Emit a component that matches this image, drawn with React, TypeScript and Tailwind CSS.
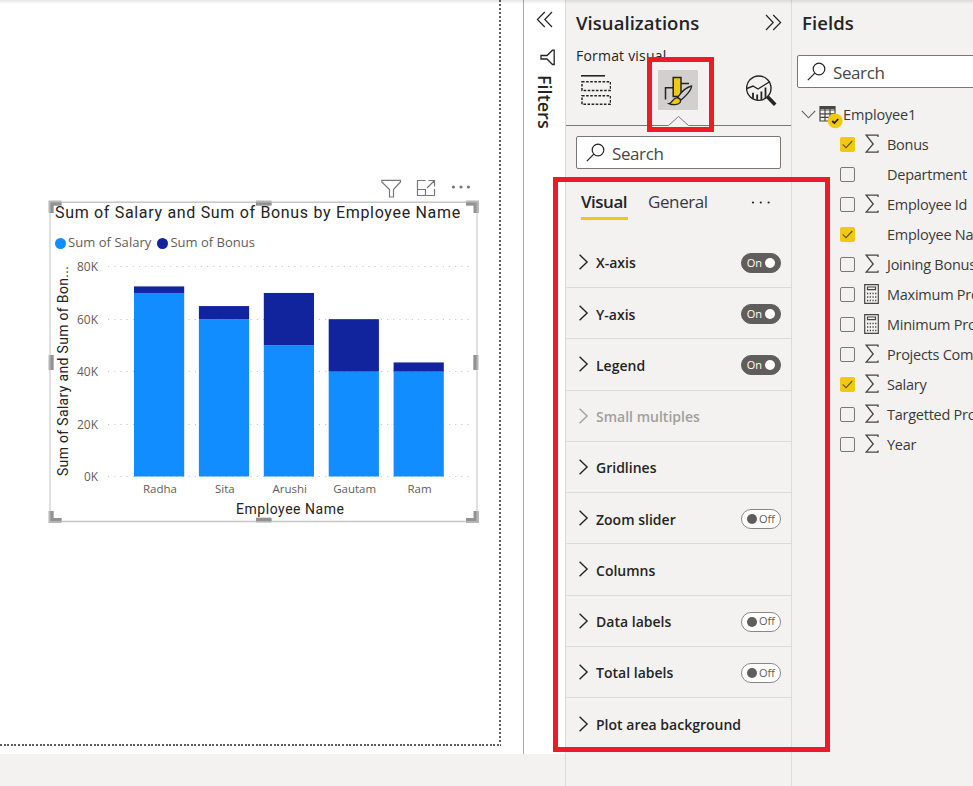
import clsx from "clsx";

type FieldIcon = "sigma" | "calc" | null;

interface Field {
  name: string;
  icon: FieldIcon;
  checked?: boolean;
}

interface FormatCard {
  label: string;
  toggle?: "on" | "off";
  disabled?: boolean;
}

const FIELDS: Field[] = [
  { name: "Bonus", icon: "sigma", checked: true },
  { name: "Department", icon: null },
  { name: "Employee Id", icon: "sigma" },
  { name: "Employee Name", icon: null, checked: true },
  { name: "Joining Bonus", icon: "sigma" },
  { name: "Maximum Projects", icon: "calc" },
  { name: "Minimum Projects", icon: "calc" },
  { name: "Projects Completed", icon: "sigma" },
  { name: "Salary", icon: "sigma", checked: true },
  { name: "Targetted Projects", icon: "sigma" },
  { name: "Year", icon: "sigma" },
];

const CARDS: FormatCard[] = [
  { label: "X-axis", toggle: "on" },
  { label: "Y-axis", toggle: "on" },
  { label: "Legend", toggle: "on" },
  { label: "Small multiples", disabled: true },
  { label: "Gridlines" },
  { label: "Zoom slider", toggle: "off" },
  { label: "Columns" },
  { label: "Data labels", toggle: "off" },
  { label: "Total labels", toggle: "off" },
  { label: "Plot area background" },
];

const BARS = [
  { name: "Radha", salary: 70, bonus: 2.5 },
  { name: "Sita", salary: 60, bonus: 5 },
  { name: "Arushi", salary: 50, bonus: 20 },
  { name: "Gautam", salary: 40, bonus: 20 },
  { name: "Ram", salary: 40, bonus: 3.5 },
];

const TICKS = [80, 60, 40, 20, 0];

// plot coordinates, relative to the chart svg
const BASE = 222.5;
const UNIT = 2.622;

function Plot() {
  return (
    <svg width="431" height="269" className="block font-['Open_Sans',sans-serif]">
      {TICKS.map((tick) => {
        const y = Math.floor(BASE - tick * UNIT) + 0.5;
        return (
          <g key={tick}>
            <line x1="60" x2="423" y1={y} y2={y} stroke="#c8c8c8" strokeWidth="1" strokeDasharray="1.2 5" />
            <text x="50" y={y + 4} textAnchor="end" fontSize="12" fill="#605e5c" textLength={tick ? 21 : 14} lengthAdjust="spacingAndGlyphs">
              {tick}K
            </text>
          </g>
        );
      })}
      {BARS.map((bar, i) => {
        const x = 86 + i * 64.9;
        const salary = bar.salary * UNIT;
        const bonus = bar.bonus * UNIT;
        return (
          <g key={bar.name}>
            <rect x={x} y={BASE - salary} width="50.2" height={salary} fill="#118dff" />
            <rect x={x} y={BASE - salary - bonus} width="50.2" height={bonus} fill="#12239e" />
            <text x={x + 26} y="239" textAnchor="middle" fontSize="11.5" fill="#605e5c">
              {bar.name}
            </text>
          </g>
        );
      })}
      <text x="188" y="260" fontSize="14" fill="#252423" textLength="108" className="font-[Roboto,sans-serif]">
        Employee Name
      </text>
      <text transform="translate(19.5 222) rotate(-90)" fontSize="14" fill="#252423" textLength="210" className="font-[Roboto,sans-serif]">
        Sum of Salary and Sum of Bon...
      </text>
    </svg>
  );
}

function SelectionFrame() {
  return (
    <svg width="431" height="323" className="absolute inset-0" fill="none">
      <rect x="2" y="2" width="427" height="319.5" stroke="#e0e0e0" strokeWidth="2" />
      <path d="M1 2.5H430M1 321.5H430" stroke="#c8c8c8" />
      <g stroke="#b6b6b6" strokeWidth="5">
        <path d="M13.5 3H3V13M208 3H223.5M418 3H428.5V13M3 155V170M428 155V170M13.5 320.5H3V311M208 320H223.5M418 320.5H428.5V311" />
      </g>
      <g stroke="#929292" strokeWidth="3">
        <path d="M13.5 4H4V13M208 4H223.5M418 4H427V13M4 155V170M427 155V170M13.5 319.5H4V311M208 319.5H223.5M418 319.5H427V311" />
      </g>
    </svg>
  );
}

function ChartVisual() {
  return (
    <div>
      <div className="flex h-[22px] w-[431px] items-center justify-end gap-[14px] pr-[9px] text-[#7a7876]">
        <svg width="22" height="20" fill="none" stroke="currentColor" strokeWidth="1.2">
          <path d="M1.8 1.3H20.5V3L13.5 10.5V18H9.5V10.5L1.8 3Z" />
        </svg>
        <svg width="20" height="18" fill="none" stroke="currentColor" strokeWidth="1.2" className="-mt-[2px]">
          <path d="M9.5 1.5H1.5V16.5H18.5V10M1.5 10.5H9.5V16.5M11 9L18 2M12.5 1.5H18.5V7.5" />
        </svg>
        <svg width="20" height="6" fill="currentColor" className="-mt-[2px]">
          <circle cx="3.4" cy="2" r="1.6" />
          <circle cx="11" cy="2" r="1.6" />
          <circle cx="18.4" cy="2" r="1.6" />
        </svg>
      </div>
      <div className="relative h-[323px] w-[431px]">
        <SelectionFrame />
        <div className="relative pt-[3px] pl-[7px] font-[Roboto,sans-serif] text-[16px] leading-[19px] tracking-[0.68px] whitespace-nowrap text-[#252423]">
          Sum of Salary and Sum of Bonus by Employee Name
        </div>
        <div className="mt-[12px] flex h-[18px] items-center gap-[6px] pl-[7px] text-[13px] text-[#605e5c]">
          <div className="flex items-center gap-[2px]">
            <span className="size-[11px] rounded-full bg-[#118dff]" />
            <span className="tracking-[0.05px]">Sum of Salary</span>
          </div>
          <div className="flex items-center gap-[2px]">
            <span className="size-[11px] rounded-full bg-[#12239e]" />
            <span>Sum of Bonus</span>
          </div>
        </div>
        <div className="mt-[2px]">
          <Plot />
        </div>
      </div>
    </div>
  );
}

function DoubleChevron({ left }: { left?: boolean }) {
  return (
    <svg width="17" height="17" fill="none" stroke="#252423" strokeWidth="1.2" className={clsx(left && "rotate-180")}>
      <path d="M1 1L8.2 8.5L1 16M8.2 1L15.6 8.5L8.2 16" />
    </svg>
  );
}

function SearchBox({ className }: { className?: string }) {
  return (
    <div className={clsx("flex h-[33px] items-center rounded-[2px] border border-[#7a7876] bg-white pl-[9px]", className)}>
      <svg width="19" height="19" fill="none" stroke="#252423" strokeWidth="1.2">
        <circle cx="12" cy="7" r="5.8" />
        <path d="M7.8 11.2L0.8 18.2" />
      </svg>
      <span className="mt-[2px] ml-[7px] text-[17px] tracking-[-0.4px] text-[#484644]">Search</span>
    </div>
  );
}

function FiltersPane() {
  return (
    <div className="flex w-[42px] flex-col items-center border-l border-[#ababab] bg-white pt-[11px]">
      <DoubleChevron left />
      <svg width="16" height="17" fill="none" stroke="#252423" strokeWidth="1.3" className="mt-[21px] ml-[6px]">
        <path d="M14.2 1.2V15.5H12.5L7 10H1V6.5H7L12.5 1.2Z" />
      </svg>
      <div className="mt-[9px] ml-px text-[18px] leading-[20px] font-semibold text-[#252423] [writing-mode:vertical-rl]">
        Filters
      </div>
    </div>
  );
}

function FieldWellsIcon() {
  return (
    <svg width="30" height="30" fill="none" stroke="#252423">
      <path d="M0 0.8H24" strokeWidth="1.6" />
      <path d="M1 6.8H29.5V15.5H1Z M1 20.8H29.5V29.3H1Z" strokeWidth="1.5" strokeDasharray="2.6 1.5" />
    </svg>
  );
}

function FormatIcon() {
  return (
    <svg width="29" height="31" fill="none" stroke="#252423" strokeWidth="1.5">
      <path d="M1.5 24.5V12.8H9M17 8.5H25" />
      <path d="M9.2 2.5H17V21.5H9.2Z" fill="#f2c811" />
      <path d="M13.6 22.3C17 17.5 22 12 27.6 11C27.5 15 21.5 21.5 17 25Z" fill="#d2d0ce" strokeWidth="1.3" />
      <path d="M5 28.6C8.3 28.2 8.6 23.4 12.4 22.9C15.6 22.8 17.5 25.2 16.2 27.4C14 30.3 8.5 30.2 5 28.6Z" fill="#f2c811" strokeWidth="1.3" />
    </svg>
  );
}

function AnalyticsIcon() {
  return (
    <svg width="32" height="32" fill="none" stroke="#252423" strokeWidth="1.4">
      <circle cx="12.8" cy="13.2" r="12.2" />
      <path d="M1 13.5L7 11L12 14L24 6.5" />
      <path d="M7 23.5V17.8M11.2 25V19.5M15.4 25V16.5M19.5 23V12.5" strokeWidth="1.8" />
      <path d="M21.5 21.8L29.2 29.8" strokeWidth="3.6" />
    </svg>
  );
}

function Toggle({ on }: { on: boolean }) {
  return (
    <div
      className={clsx(
        "mt-[2px] flex h-5 w-10 items-center rounded-full border text-[11px]",
        on ? "justify-end gap-[3px] border-[#605e5c] bg-[#605e5c] pr-[5px] text-white" : "gap-[2px] border-[#8a8886] bg-white pl-[5px] text-[#605e5c]"
      )}
    >
      {on && <span>On</span>}
      <span className={clsx("size-[10px] shrink-0 rounded-full", on ? "bg-white" : "bg-[#605e5c]")} />
      {!on && <span>Off</span>}
    </div>
  );
}

function VisualizationsPane() {
  return (
    <div className="flex w-[227px] shrink-0 flex-col border-x border-[#dcdbda]">
      <div className="flex h-[45px] items-center justify-between pr-[9px] pl-[10px]">
        <h2 className="text-[18.5px] font-semibold tracking-[0.05px]">Visualizations</h2>
        <DoubleChevron />
      </div>
      <div className="h-[20px] pl-[10px] text-[14px] leading-[21px] tracking-[0.2px]">Format visual</div>
      <div className="flex h-[51px] items-start">
        <div className="mt-[10px] ml-[15px]">
          <FieldWellsIcon />
        </div>
        <div className="mt-[5px] ml-[47px] flex size-10 items-center justify-center rounded-[1px] bg-[#d2d0ce] pl-px">
          <FormatIcon />
        </div>
        <div className="mt-[10px] ml-[48px]">
          <AnalyticsIcon />
        </div>
      </div>
      <svg width="225" height="11" fill="none" stroke="#7a7876" className="block shrink-0">
        <path d="M0 9.5H102.5L112.5 0.5L122.5 9.5H225" />
      </svg>
      <SearchBox className="mx-[10px] mt-[9px] shrink-0" />

      <div className="mt-[18px] flex h-[33px] shrink-0 items-start pl-[15px] text-[17px] leading-[29px]">
        <div className="h-[33px] w-[47px] border-b-[3px] border-[#f2c811] font-semibold tracking-[-0.5px]">Visual</div>
        <div className="ml-5 w-[60px] tracking-[-0.4px] text-[#3b3a39]">General</div>
        <svg width="20" height="4" fill="#252423" className="mt-[14px] ml-[43px]">
          <circle cx="2" cy="1.5" r="1.1" />
          <circle cx="9.8" cy="1.5" r="1.1" />
          <circle cx="17.6" cy="1.5" r="1.1" />
        </svg>
      </div>

      <div className="mt-[16.75px]">
        {CARDS.map((card) => (
          <div
            key={card.label}
            className={clsx(
              "flex h-[51.25px] items-center border-b border-[#dcdbda] pr-[10px] pl-[13px] last:border-b-0",
              card.disabled ? "text-[#a19f9d]" : "text-[#252423]"
            )}
          >
            <svg width="10" height="16" fill="none" stroke="currentColor" strokeWidth="1.4">
              <path d="M0.6 0.8L8.1 8L0.6 15.2" />
            </svg>
            <span className="mt-[2px] ml-[7px] flex-1 text-[14px] font-semibold tracking-[0.01px]">{card.label}</span>
            {card.toggle && <Toggle on={card.toggle === "on"} />}
          </div>
        ))}
      </div>
    </div>
  );
}

function FieldGlyph({ icon }: { icon: FieldIcon }) {
  if (icon === "sigma") {
    return (
      <svg width="14" height="20" fill="none" stroke="#484644" strokeWidth="1.3">
        <path d="M13 3V1.2H1.2L8.2 10L1.2 18.2H13V16.4" />
      </svg>
    );
  }
  if (icon === "calc") {
    return (
      <svg width="15" height="20" fill="none" stroke="#484644" strokeWidth="1.2" className="-ml-px">
        <path d="M0.7 0.7H14.3V19.3H0.7Z M3.5 3H11.5V5.6H3.5Z" />
        <path d="M3 9.5H12.5M3 13H12.5M3 16.5H12.5" strokeWidth="1.3" strokeDasharray="1.3 1.4" />
      </svg>
    );
  }
  return <span className="w-[14px]" />;
}

function FieldsPane() {
  return (
    <div className="w-[181px] shrink-0 overflow-hidden">
      <h2 className="flex h-[45px] items-center pl-[10px] text-[18.5px] font-semibold tracking-[0.1px]">Fields</h2>
      <SearchBox className="mt-[10px] ml-[5px] w-[200px]" />
      <div className="mt-[12px] flex h-[29px] items-center pl-[9px] text-[14.5px] whitespace-nowrap text-[#3b3a39]">
        <svg width="15" height="9" fill="none" stroke="#605e5c" strokeWidth="1.1">
          <path d="M0.8 0.8L7.5 7.8L14.2 0.8" />
        </svg>
        <svg width="26" height="24" fill="none" stroke="#484644" strokeWidth="1.2" className="mt-[5px] ml-[3px]">
          <path d="M1 1.5H16V16H1Z M1 5H16M1 8.8H16M1 12.4H16M6 4V16M11 4V16" />
          <path d="M1 3H16" strokeWidth="2" />
          <circle cx="16.2" cy="15.8" r="7.4" fill="#f2c811" stroke="none" />
          <path d="M13.2 16L15.4 18L19.2 14" stroke="#252423" strokeWidth="1.8" />
        </svg>
        <span className="-ml-[2px] tracking-[-0.15px]">Employee1</span>
      </div>
      {FIELDS.map((field) => (
        <div key={field.name} className="flex h-[30px] items-center pl-[48px] text-[14.5px] tracking-[-0.25px] whitespace-nowrap text-[#3b3a39]">
          <span
            className={clsx(
              "flex size-[15px] shrink-0 items-center justify-center rounded-[2px]",
              field.checked ? "bg-[#f2c811]" : "border border-[#7a7876]"
            )}
          >
            {field.checked && (
              <svg width="11" height="9" fill="none" stroke="#605317" strokeWidth="1.1">
                <path d="M0.7 4.3L4 7.6L10.3 1" />
              </svg>
            )}
          </span>
          <span className="mr-[8px] ml-[10px] flex shrink-0">
            <FieldGlyph icon={field.icon} />
          </span>
          <span className="mt-px">{field.name}</span>
        </div>
      ))}
    </div>
  );
}

export default function App() {
  return (
    <div className="relative flex h-[786px] w-[973px] overflow-hidden bg-[#f3f2f1] font-['Open_Sans',sans-serif] text-[#252423]">
      <div className="flex w-[565px] shrink-0 flex-col">
        <div className="flex h-[754px]">
          <div className="w-[523px] bg-white">
            <div className="flex h-[744px] w-[501px]">
              <div className="w-[499px] pt-[178px] pl-[48px]">
                <ChartVisual />
              </div>
              <div className="w-[2px] bg-[repeating-linear-gradient(to_bottom,#605e5c_0_2px,white_2px_4px)]" />
            </div>
            <div className="h-[2px] w-[501px] bg-[repeating-linear-gradient(to_right,#605e5c_0_2px,white_2px_3.6px)]" />
          </div>
          <FiltersPane />
        </div>
      </div>
      <VisualizationsPane />
      <FieldsPane />

      <div className="absolute inset-x-0 top-0 h-[4px] bg-gradient-to-b from-black/10 to-transparent" />
      <div className="absolute top-[57px] left-[647px] h-[75px] w-[67px] border-5 border-[#ec1c24]" />
      <div className="absolute top-[177px] left-[553px] h-[575px] w-[277px] border-5 border-[#ec1c24]" />
    </div>
  );
}
